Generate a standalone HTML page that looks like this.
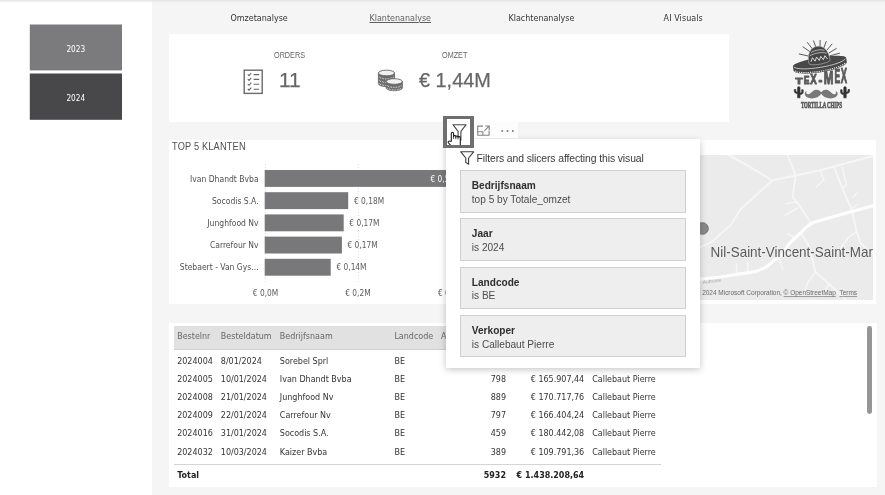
<!DOCTYPE html>
<html lang="nl">
<head>
<meta charset="utf-8">
<title>Klantenanalyse</title>
<style>
*{box-sizing:border-box;margin:0;padding:0}
html,body{width:885px;height:495px;overflow:hidden}
body{position:relative;background:#f5f5f5;font-family:"DejaVu Sans Condensed","DejaVu Sans","Liberation Sans",sans-serif;font-stretch:condensed;color:#333}
.abs{position:absolute}
.t{position:absolute;white-space:nowrap;line-height:1}
#left{left:0;top:0;width:151.700px;height:495px;background:#fff}
#topshade{left:0;top:0;width:885px;height:3px;background:linear-gradient(#e2e2e2,rgba(236,236,236,.6) 55%,rgba(245,245,245,0))}
.btn{left:29.800px;width:92px;color:#fff;font-size:8.200px;text-align:center}
.card{background:#fff}
.tab{font-family:"DejaVu Sans",sans-serif;font-stretch:normal;font-size:8px;color:#333;top:14.500px}
.sx{transform-origin:0 50%}
.din{font-family:"Liberation Sans",sans-serif;color:#666}
.big{-webkit-text-stroke:.25px #666}
.seg{font-family:"Liberation Sans",sans-serif}
.fc{left:460.300px;width:225.400px;height:42.300px;background:#eeeeee;box-shadow:inset 0 0 0 1px #d0d0d0}
.fc b{position:absolute;left:11.500px;top:10.800px;font-size:10.100px;line-height:1;color:#2e2e2e;font-family:"Liberation Sans",sans-serif;white-space:nowrap}
.fc span{position:absolute;left:11.500px;top:24.700px;font-size:10.100px;line-height:1;color:#4c4c4c;font-family:"Liberation Sans",sans-serif;white-space:nowrap}
.lbl{font-size:8.500px;color:#505050;text-align:right;width:100px;left:158.600px}
.val{font-size:8.300px;color:#5c5c5c}
.bar{left:264.700px;height:16.800px;background:#78787b}
.th{font-family:"DejaVu Sans",sans-serif;font-stretch:normal;font-size:8px;color:#666;top:333px}
.td{font-family:"DejaVu Sans",sans-serif;font-stretch:normal;font-size:8px;color:#333}
.r{text-align:right}
.tot{font-weight:bold;color:#222}
</style>
</head>
<body>
<div id="root" class="abs" style="left:0;top:0;width:885px;height:495px;will-change:transform">
<div id="left" class="abs"></div>
<div id="topshade" class="abs"></div>

<!-- year slicer -->
<svg class="abs" style="left:0;top:0" width="152" height="130" viewBox="0 0 152 130"><rect x="29.800" y="24.500" width="92.200" height="45.900" fill="#7b7b7e"/><rect x="29.800" y="73.500" width="92.200" height="46.300" fill="#48484a"/></svg>
<div class="t btn" style="top:44.900px">2023</div>
<div class="t btn" style="top:94.400px">2024</div>

<!-- tabs -->
<div class="t tab" style="left:230.5px">Omzetanalyse</div>
<div class="t tab" style="left:369.5px;text-decoration:underline;color:#5e5e5e">Klantenanalyse</div>
<div class="t tab" style="left:508.5px">Klachtenanalyse</div>
<div class="t tab" style="left:663.600px;letter-spacing:.08px">AI Visuals</div>

<!-- KPI card -->
<div class="abs card" style="left:168.800px;top:33.700px;width:560.700px;height:88.400px"></div>
<div class="t din sx" style="left:274px;top:51.500px;font-size:8.200px;transform:scaleX(.885)">ORDERS</div>
<div class="t din sx" style="left:442px;top:51.500px;font-size:8.200px;transform:scaleX(.885)">OMZET</div>
<div class="t din big" style="left:279px;top:70.200px;font-size:20.800px">11</div>
<div class="t din sx big" style="left:418.500px;top:70.200px;font-size:20.800px;transform:scaleX(.955)">€ 1,44M</div>

<!-- KPI icons -->
<svg class="abs" style="left:242px;top:68px" width="23" height="28" viewBox="0 0 23 28">
 <rect x="2.2" y="2.2" width="18" height="23.2" fill="none" stroke="#6a6a6a" stroke-width="1.4"/>
 <g fill="none" stroke="#666" stroke-width="1.1">
  <path d="M5.8 6.4l1.2 1.2l2.3-2.6M11.6 6.6h5.6"/>
  <path d="M5.8 11.2l1.2 1.2l2.3-2.6M11.6 11.4h5.6"/>
  <path d="M5.8 16.1l1.2 1.2l2.3-2.6M11.6 16.3h5.6"/>
  <path d="M5.8 21l1.2 1.2l2.3-2.6M11.6 21.2h5.6"/>
 </g>
</svg>
<svg class="abs" style="left:376px;top:68px" width="30" height="25" viewBox="0 0 30 25">
 <g fill="#6c6c6c" stroke="#686868" stroke-width=".9">
  <path d="M2.400 5v10.600c0 1.700 3.600 3 8.100 3s8.100-1.300 8.100-3v-10.600z"/>
  <ellipse cx="10.500" cy="5" rx="8.100" ry="2.800" fill="#f1f1f1"/>
 </g>
 <g fill="none" stroke="#dcdcdc" stroke-width="1.300" stroke-dasharray=".7 .9">
  <path d="M3.200 8.800c1 1.300 3.900 2.100 7.300 2.100s6.300-.8 7.300-2.100"/>
  <path d="M3.200 12.200c1 1.300 3.900 2.100 7.300 2.100"/>
  <path d="M3.200 15.400c1 1.300 3.900 2.100 7.300 2.100"/>
 </g>
 <g fill="#6c6c6c" stroke="#686868" stroke-width=".9">
  <path d="M10.200 13.500v6.200c0 1.700 3.600 3 8.100 3s8.100-1.300 8.100-3v-6.200z"/>
  <ellipse cx="18.300" cy="13.500" rx="8.100" ry="2.800" fill="#f1f1f1"/>
 </g>
 <g fill="none" stroke="#dcdcdc" stroke-width="1.300" stroke-dasharray=".7 .9">
  <path d="M11 17.300c1 1.300 3.900 2.100 7.300 2.100s6.300-.8 7.300-2.100"/>
  <path d="M11.600 20.300c1.300 1 3.700 1.600 6.700 1.600s5.400-.6 6.700-1.600"/>
 </g>
</svg>


<!-- logo -->
<svg class="abs" style="left:786px;top:36px" width="70" height="78" viewBox="786 36 70 78">
 <path d="M809.6 56.3L799.2 54.0M811.2 52.6L803.0 46.9M813.4 50.2L807.4 42.5M816.4 48.6L813.6 40.9M820.0 48.0L820.1 40.4M823.5 48.7L826.2 41.5M826.6 50.5L831.9 44.2M828.9 53.0L836.3 48.5M830.0 55.8L839.5 53.2" stroke="#4a4a4a" stroke-width=".9" fill="none" stroke-linecap="round"/>
 <g transform="rotate(-9.300 820 65) translate(0 -3.200)">
  <path d="M793 65.200c0-2.600 12-4.700 27-4.700s27 2.100 27 4.700v4.200c0 3.400-12 6.200-27 6.200s-27-2.800-27-6.200z" fill="#484848"/>
  <path d="M793.800 66c2.500 2.800 13.200 4.600 26.200 4.600s23.700-1.800 26.200-4.600" stroke="#d4d4d4" stroke-width=".8" fill="none"/>
  <path d="M794.200 70c3 2.700 13.400 4.400 25.800 4.400s22.800-1.700 25.800-4.400" stroke="#e6e6e6" stroke-width="1.200" stroke-dasharray="1.200 1" fill="none"/>
  <path d="M809.300 65C808.800 56 813 49.300 820 49.300S831.200 56 830.700 65A10.700 2.400 0 0 1 809.300 65z" fill="#444" stroke="#bdbdbd" stroke-width=".55"/>
  <path d="M813.200 54.400c4-1.800 9.600-1.800 13.600 0M811.400 57.600c5.300-2.200 11.900-2.200 17.200 0" stroke="#d8d8d8" stroke-width=".7" fill="none"/>
  <path d="M811.600 63.600l2.100-3.800l2.100 3.800l2.100-3.800l2.100 3.800l2.100-3.800l2.100 3.800l2.100-3.800l2.100 3.800" stroke="#f2f2f2" stroke-width=".8" fill="none" stroke-linejoin="round"/>
 </g>
 <text font-family="Liberation Sans, sans-serif" font-weight="bold" fill="#5a5a5a" stroke="#5a5a5a" stroke-width="1.100" stroke-linejoin="round"><tspan x="795.6" y="83.8" font-size="9.8" textLength="7.0" lengthAdjust="spacingAndGlyphs">T</tspan><tspan x="803.8" y="84.0" font-size="11.6" textLength="5.7" lengthAdjust="spacingAndGlyphs">E</tspan><tspan x="810.2" y="84.3" font-size="14.0" textLength="6.5" lengthAdjust="spacingAndGlyphs">X</tspan><tspan x="818.4" y="84.9" font-size="15" textLength="3.8" lengthAdjust="spacingAndGlyphs">-</tspan><tspan x="823.7" y="84.0" font-size="18.2" textLength="9.7" lengthAdjust="spacingAndGlyphs">M</tspan><tspan x="834.4" y="83.3" font-size="19.6" textLength="5.7" lengthAdjust="spacingAndGlyphs">E</tspan><tspan x="840.7" y="82.6" font-size="21.3" textLength="6.3" lengthAdjust="spacingAndGlyphs">X</tspan></text>
 <g fill="#333" stroke="#333" stroke-width=".7" stroke-linejoin="round">
  <path d="M797.600 97.800v-4.300c-2.100.2-3.300-.9-3.300-2.700v-1.300h1.500v1.200c0 .9.700 1.300 1.800 1.200v-4.200c0-1.400 2.400-1.400 2.400 0v5.300c1.100 0 1.700-.4 1.700-1.300v-1.900h1.500v2c0 1.800-1.200 2.900-3.200 2.800v3.200z"/>
  <path d="M843.800 97.800v-3.200c-2 .1-3.200-1-3.200-2.800v-2h1.500v1.900c0 .9.600 1.300 1.700 1.300v-5.300c0-1.400 2.400-1.400 2.400 0v4.200c1.100.1 1.800-.3 1.800-1.200v-1.200h1.500v1.300c0 1.800-1.200 2.900-3.300 2.700v4.300z"/>
 </g>
 <path d="M821.200 92.200c-2.200-3-6.200-3.300-8.800-.800c-1.900 1.900-3.400 3.300-5.100 2.600c-1.300-.5-1.400-2.200-.4-3c-1.800.3-2.700 2.300-1.900 4.100c1.200 2.700 5.300 4 9.500 3c3-.7 5.300-2.300 6.700-4.400c1.400 2.100 3.700 3.700 6.700 4.400c4.200 1 8.300-.3 9.500-3c.8-1.800-.1-3.800-1.900-4.100c1 .8.900 2.500-.4 3c-1.700.7-3.200-.7-5.100-2.600c-2.600-2.500-6.600-2.200-8.800.800z" fill="#787878"/>
 <text x="800.900" y="108.400" font-family="Liberation Serif, serif" font-weight="bold" font-size="9.200" fill="#585858" stroke="#585858" stroke-width=".7" textLength="41" lengthAdjust="spacingAndGlyphs">TORTILLA CHIPS</text>
</svg>

<!-- chart card -->
<div class="abs card" style="left:168.800px;top:140.400px;width:525.700px;height:163.800px"></div>
<div class="t din sx" style="left:172.300px;top:142.200px;font-size:10.200px;letter-spacing:.2px;color:#505050;transform:scale(.905,1)">TOP 5 KLANTEN</div>


<!-- chart content -->
<svg class="abs" style="left:169.5px;top:140px" width="525" height="165" viewBox="0 0 525 165">
 <g stroke="#dedede" stroke-width="1" stroke-dasharray="1 2">
  <path d="M95.500 24v118M188.300 24v118M281 24v118M373.800 24v118M466.500 24v118"/>
 </g>
</svg>
<svg class="abs" style="left:260px;top:165px" width="320" height="115" viewBox="260 165 320 115"><g fill="#78787b"><rect x="264.700" y="170.0" width="300" height="16.900"/><rect x="264.700" y="192.2" width="83.500" height="16.900"/><rect x="264.700" y="214.4" width="79" height="16.900"/><rect x="264.700" y="236.6" width="77.200" height="16.900"/><rect x="264.700" y="258.8" width="66" height="16.900"/></g></svg>
<div class="t lbl" style="top:174.500px">Ivan Dhandt Bvba</div>
<div class="t lbl" style="top:196.700px">Socodis S.A.</div>
<div class="t lbl" style="top:218.900px">Junghfood Nv</div>
<div class="t lbl" style="top:241.100px">Carrefour Nv</div>
<div class="t lbl" style="top:263.300px">Stebaert - Van Gys...</div>
<div class="t val" style="left:430.500px;top:174.500px;color:#fff">€ 0,56M</div>
<div class="t val" style="left:354px;top:196.700px">€ 0,18M</div>
<div class="t val" style="left:349.300px;top:218.900px">€ 0,17M</div>
<div class="t val" style="left:347.500px;top:241.100px">€ 0,17M</div>
<div class="t val" style="left:336.400px;top:263.300px">€ 0,14M</div>
<div class="t val" style="left:252.800px;top:288.500px">€ 0,0M</div>
<div class="t val" style="left:345.200px;top:288.500px">€ 0,2M</div>
<div class="t val" style="left:438px;top:288.500px">€ 0,4M</div>

<!-- map card -->
<div class="abs card" style="left:697px;top:140.400px;width:179.300px;height:163.800px"></div>


<svg class="abs" style="left:697px;top:155px" width="175.500" height="144.500" viewBox="697 155 175.500 144.500">
 <rect x="697" y="155" width="176" height="145" fill="#ebebeb"/>
 <g fill="none" stroke="#f6f6f6" stroke-linecap="round" stroke-linejoin="round">
  <path stroke-width="2" d="M728.500 155L750.800 167.300L772.200 180.500L795.600 175.400L820 170.300L842.400 164.200L873 156"/>
  <path stroke-width="1.900" d="M772.200 180.500L761 190.700L740.700 209L730.500 225.300L712.200 241.500L697 249"/>
  <path stroke-width="1.900" d="M787.500 155L792 166L795.600 175.400L792.500 196.800L799.700 205.900L809.800 221.200"/>
  <path stroke-width="2" d="M801 233.500L808 244L812 258L815.500 272L829 284L846 300"/>
  <path stroke-width="1.900" d="M834.200 167.300L842.400 188.600L851.500 209L856.600 231.400L860.700 243.600L873 254"/>
  <path stroke-width="1.500" d="M842.400 167.300L846.400 184.600L842.400 188.600M820 170.300L824 180L816 187"/>
  <path stroke-width="1.500" d="M785.400 203.900L795.600 201.900M785.400 215.100L797.600 208M788 234L795 238"/>
  <path stroke-width="1.500" d="M736.600 263.500v10M747.800 262.500v9.500M779 258L783 270"/>
  <path stroke-width="1.500" d="M856.600 231.400L848 238L840 249M815.500 272L808 282L803 296M829 284L822 296"/>
  <path stroke-width="1.400" d="M851.500 209L858 204M857 193L853 197"/>
  <path stroke="#fdfdfd" stroke-width="3.200" d="M697 279.500L720 277L755 271.600C764 269 768 266.500 771 263L781.300 255.300L789.500 243.500L801 232.500C805 228 809 224.500 813.900 222.200L842.400 214.100L873 205.700"/>
 </g>
 <circle cx="702.500" cy="228.500" r="5.800" fill="#8a8a8a" stroke="#666" stroke-width=".8"/>
 <text x="710.600" y="256.500" font-family="Liberation Sans, sans-serif" font-size="14.200" fill="#5a5a5a" stroke="#efefef" stroke-width="1.600" paint-order="stroke" textLength="176.500" lengthAdjust="spacingAndGlyphs">Nil-Saint-Vincent-Saint-Martin</text>
 <text x="703" y="284" font-family="Liberation Sans, sans-serif" font-size="5" fill="#aaa" transform="rotate(-8 703 284)">Aubrase</text>
 <text x="695.600" y="295.400" font-family="Liberation Sans, sans-serif" font-size="6.500" fill="#6a6a6a" textLength="161.500" lengthAdjust="spacing">© 2024 Microsoft Corporation, <tspan text-decoration="underline">© OpenStreetMap</tspan>  <tspan text-decoration="underline" dx="2">Terms</tspan></text>
</svg>

<!-- table card -->
<div class="abs card" style="left:168.800px;top:322.800px;width:708px;height:164px"></div>


<!-- table -->
<div class="abs" style="left:173.500px;top:325.700px;width:487px;height:23.600px;background:#e1e1e1"></div>
<div class="abs" style="left:173.500px;top:349.300px;width:487px;height:1px;background:#d2d2d2"></div>
<div class="t th" style="left:177.2px">Bestelnr</div>
<div class="t th" style="left:220.8px">Besteldatum</div>
<div class="t th" style="left:279.8px">Bedrijfsnaam</div>
<div class="t th" style="left:394.4px">Landcode</div>
<div class="t th" style="left:441px">Aantal_producten</div>
<div class="t th r" style="left:514px;width:70px">Totale_omzet</div>
<div class="t th" style="left:592.2px">Verkoper</div>
<div class="t td" style="left:177.2px;top:357.7px">2024004</div><div class="t td" style="left:220.8px;top:357.7px">8/01/2024</div><div class="t td" style="left:279.8px;top:357.7px">Sorebel Sprl</div><div class="t td" style="left:394.4px;top:357.7px">BE</div><div class="t td r" style="left:456px;width:50px;top:357.7px">2003</div><div class="t td r" style="left:514px;width:70.200px;top:357.7px">€ 645.945,76</div><div class="t td" style="left:592.2px;top:357.7px">Callebaut Pierre</div>
<div class="t td" style="left:177.2px;top:375.7px">2024005</div><div class="t td" style="left:220.8px;top:375.7px">10/01/2024</div><div class="t td" style="left:279.8px;top:375.7px">Ivan Dhandt Bvba</div><div class="t td" style="left:394.4px;top:375.7px">BE</div><div class="t td r" style="left:456px;width:50px;top:375.7px">798</div><div class="t td r" style="left:514px;width:70.200px;top:375.7px">€ 165.907,44</div><div class="t td" style="left:592.2px;top:375.7px">Callebaut Pierre</div>
<div class="t td" style="left:177.2px;top:394.0px">2024008</div><div class="t td" style="left:220.8px;top:394.0px">21/01/2024</div><div class="t td" style="left:279.8px;top:394.0px">Junghfood Nv</div><div class="t td" style="left:394.4px;top:394.0px">BE</div><div class="t td r" style="left:456px;width:50px;top:394.0px">889</div><div class="t td r" style="left:514px;width:70.200px;top:394.0px">€ 170.717,76</div><div class="t td" style="left:592.2px;top:394.0px">Callebaut Pierre</div>
<div class="t td" style="left:177.2px;top:412.4px">2024009</div><div class="t td" style="left:220.8px;top:412.4px">22/01/2024</div><div class="t td" style="left:279.8px;top:412.4px">Carrefour Nv</div><div class="t td" style="left:394.4px;top:412.4px">BE</div><div class="t td r" style="left:456px;width:50px;top:412.4px">797</div><div class="t td r" style="left:514px;width:70.200px;top:412.4px">€ 166.404,24</div><div class="t td" style="left:592.2px;top:412.4px">Callebaut Pierre</div>
<div class="t td" style="left:177.2px;top:430.4px">2024016</div><div class="t td" style="left:220.8px;top:430.4px">31/01/2024</div><div class="t td" style="left:279.8px;top:430.4px">Socodis S.A.</div><div class="t td" style="left:394.4px;top:430.4px">BE</div><div class="t td r" style="left:456px;width:50px;top:430.4px">459</div><div class="t td r" style="left:514px;width:70.200px;top:430.4px">€ 180.442,08</div><div class="t td" style="left:592.2px;top:430.4px">Callebaut Pierre</div>
<div class="t td" style="left:177.2px;top:448.8px">2024032</div><div class="t td" style="left:220.8px;top:448.8px">10/03/2024</div><div class="t td" style="left:279.8px;top:448.8px">Kaizer Bvba</div><div class="t td" style="left:394.4px;top:448.8px">BE</div><div class="t td r" style="left:456px;width:50px;top:448.8px">389</div><div class="t td r" style="left:514px;width:70.200px;top:448.8px">€ 109.791,36</div><div class="t td" style="left:592.2px;top:448.8px">Callebaut Pierre</div>
<div class="abs" style="left:173.500px;top:463.800px;width:487px;height:1px;background:#d4d4d4"></div>
<div class="t td tot" style="left:177.2px;top:472.1px">Total</div>
<div class="t td r tot" style="left:456px;width:50px;top:472.1px">5932</div>
<div class="t td r tot" style="left:504px;width:80.200px;top:472.1px">€ 1.438.208,64</div>
<div class="abs" style="left:867px;top:326px;width:4.800px;height:88px;background:#969696;border-radius:2.400px"></div>

<!-- filter popup bg -->
<div class="abs" style="left:446px;top:138.5px;width:253.5px;height:229px;background:#fff;box-shadow:0 1.500px 7px rgba(0,0,0,.24)"></div>
<!-- toolbar -->
<div class="abs" style="left:474px;top:122px;width:44px;height:15.800px;background:#fdfdfd"></div>
<div class="abs" style="left:443.300px;top:116px;width:30.400px;height:32px;background:#6f6f6f"></div>
<div class="abs" style="left:446.600px;top:119.200px;width:23.300px;height:25.700px;background:#fff"></div>
<svg class="abs" style="left:450px;top:122px" width="20" height="22" viewBox="0 0 20 22">
 <path d="M2.900 2.700h13.200l-5.200 6.600v9l-2.800 -2.200v-6.800z" fill="#fff" stroke="#484848" stroke-width="1.100" stroke-linejoin="round"/>
</svg>
<svg class="abs" style="left:476px;top:124px" width="16" height="14" viewBox="0 0 16 14">
 <g fill="none" stroke="#858585" stroke-width="1.100">
  <path d="M7 2.100h-5.300v9.100h11.400v-4.700"/>
  <path d="M9.300 2h3.900v3.900M13 2.200l-4.600 4.600"/>
  <path d="M1.700 7.700h5.200v3.500"/>
 </g>
</svg>
<svg class="abs" style="left:499.700px;top:127.500px" width="16" height="6" viewBox="0 0 16 6">
 <g fill="#7a7a7a"><circle cx="2.200" cy="3" r="1"/><circle cx="7.500" cy="3" r="1"/><circle cx="12.800" cy="3" r="1"/></g>
</svg>

<!-- filter popup -->


<svg class="abs" style="left:459px;top:149.500px" width="17" height="16" viewBox="0 0 17 16">
 <path d="M1.800 1.800h12.800l-5 6.200v6.200l-2.800 -1.800v-4.400z" fill="none" stroke="#3c3c3c" stroke-width="1.100" stroke-linejoin="round"/>
</svg>
<div class="t seg" id="ptitle" style="left:476.500px;top:154px;font-size:10.400px;letter-spacing:-.1px;color:#3a3a3a">Filters and slicers affecting this visual</div>
<div class="abs fc" style="top:170.300px"><b>Bedrijfsnaam</b><span>top 5 by Totale_omzet</span></div>
<div class="abs fc" style="top:218.400px"><b>Jaar</b><span>is 2024</span></div>
<div class="abs fc" style="top:266.800px"><b>Landcode</b><span>is BE</span></div>
<div class="abs fc" style="top:315.200px"><b>Verkoper</b><span>is Callebaut Pierre</span></div>
<!-- hand cursor -->
<svg class="abs" style="left:446px;top:130px" width="16" height="15" viewBox="446 130 16 15">
 <path d="M451.300 141.200V133.400c0-1.500 2.300-1.500 2.300 0V136.400c0-1.200 2.200-1.200 2.200 0v.5c0-1.200 2.200-1.200 2.200 0v.6c0-1.100 2.300-1.100 2.300 0V147H452.200L448.500 143c-.9-1.200.6-2.500 1.600-1.700z" fill="#fff" stroke="#1c1c1c" stroke-width="1.100" stroke-linejoin="round"/>
 <path d="M453.600 136.600v2.400M455.800 137v2.200M458 137.600v1.800" stroke="#1c1c1c" stroke-width=".8" fill="none"/>
</svg>

</div>
</body>
</html>
